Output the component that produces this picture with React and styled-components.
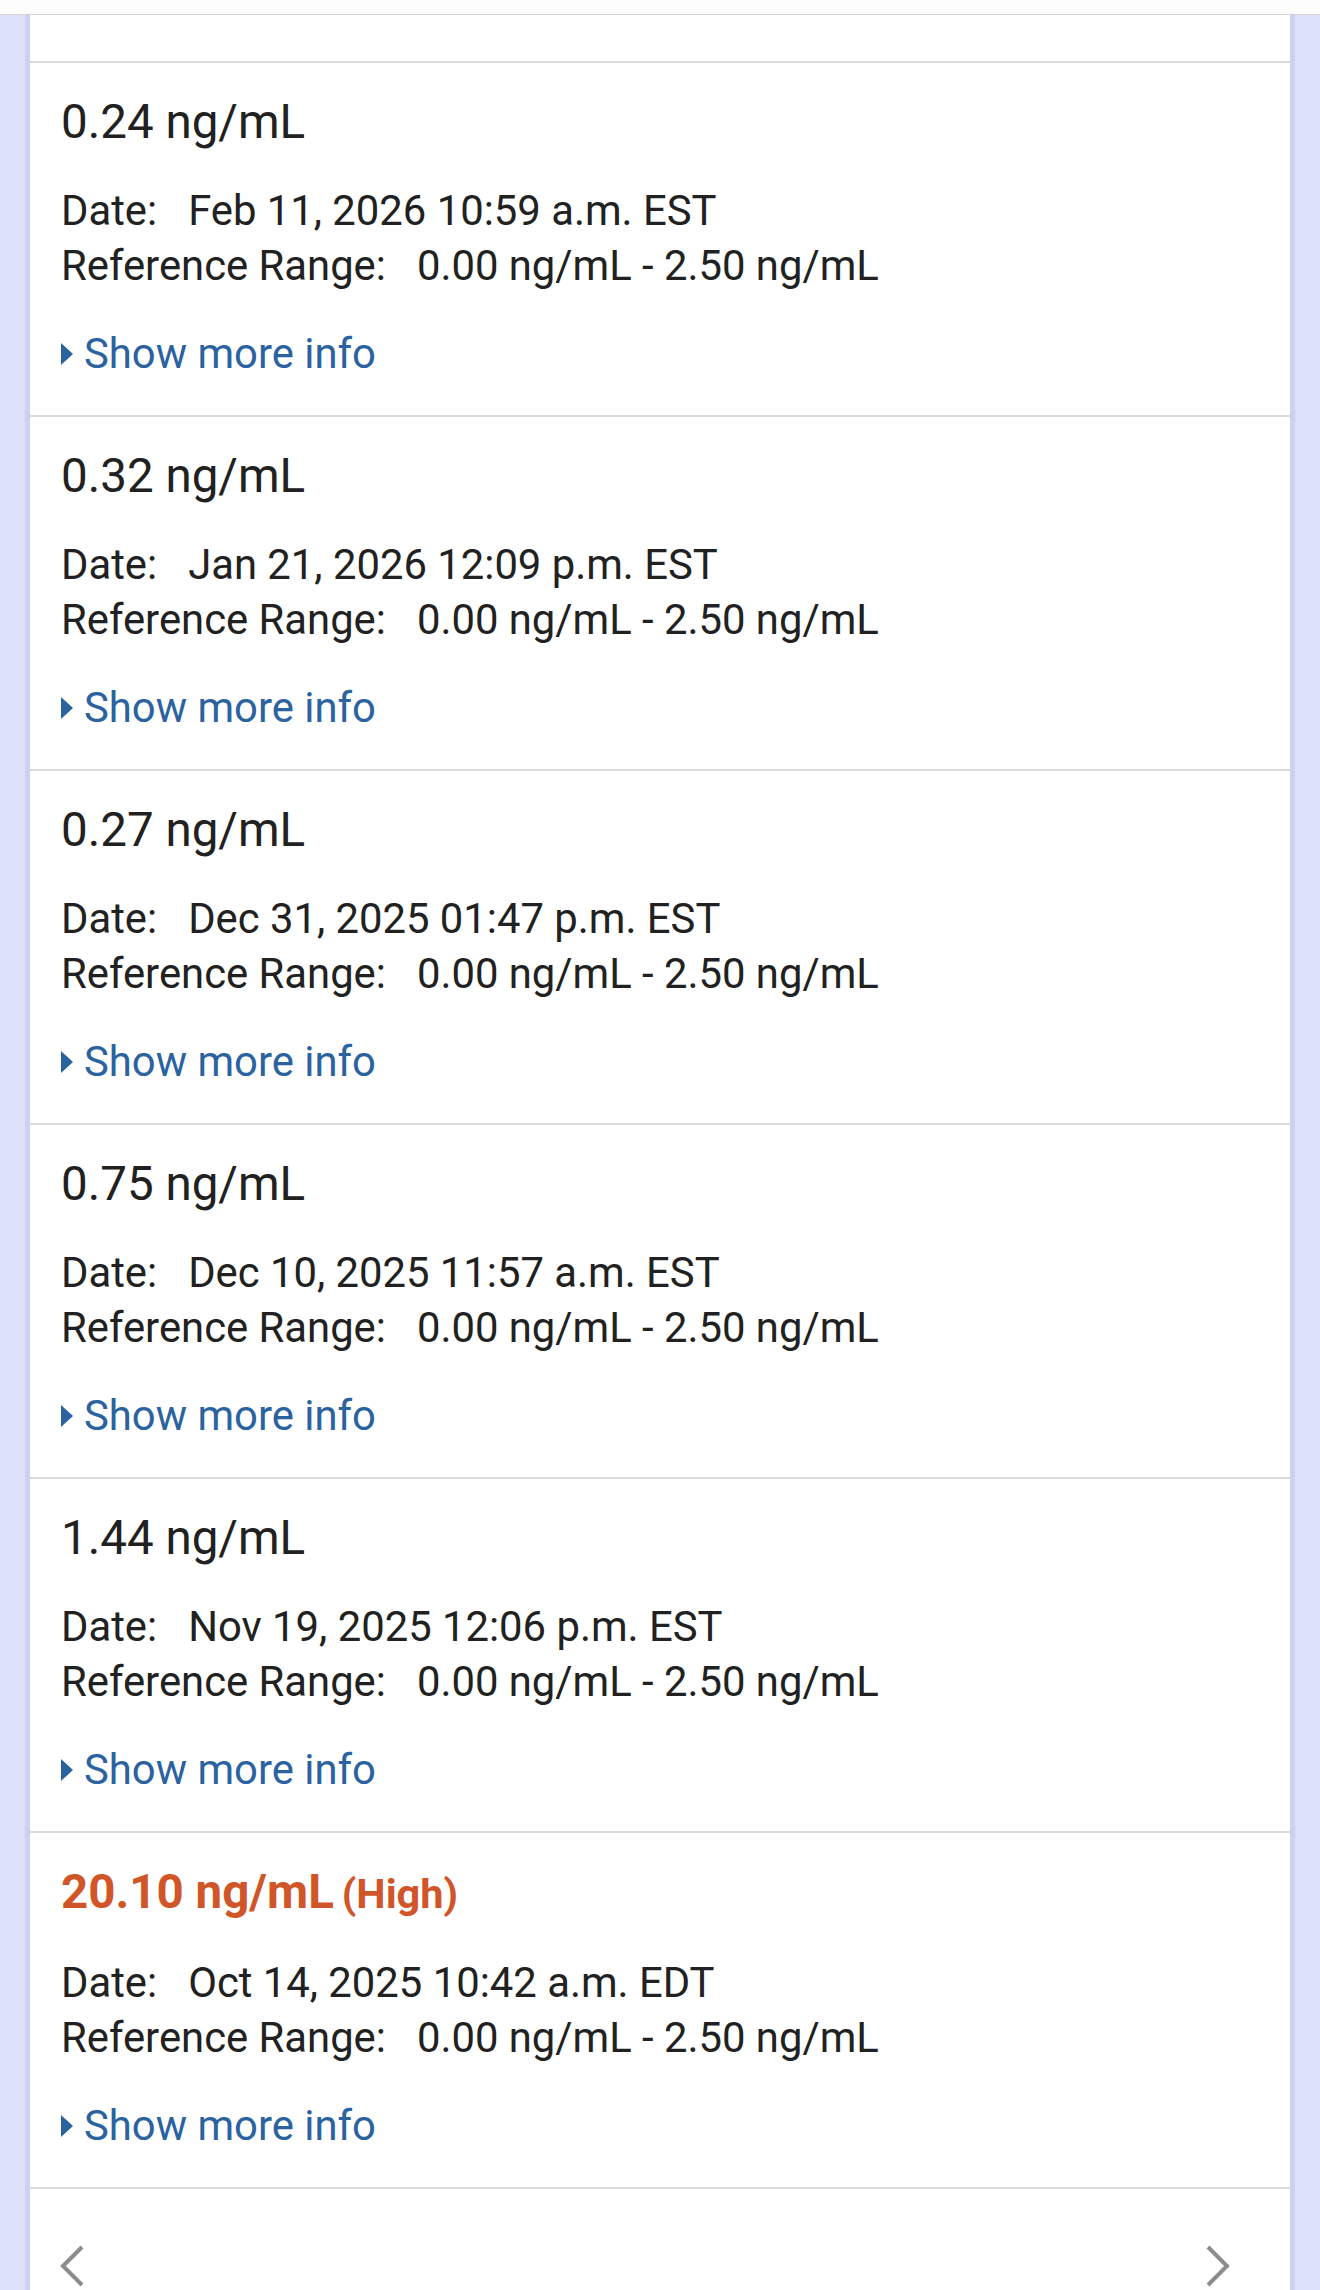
import React from 'react';
import styled, { createGlobalStyle } from 'styled-components';

const ink = '#212121';
const link = '#2b62a0';
const alert = '#d0562a';
const rule = '#dadada';
const lavender = '#dee1fb';

const GlobalStyle = createGlobalStyle`
  html, body {
    margin: 0;
    padding: 0;
    background: ${lavender};
  }
  body {
    font-family: Roboto, "Noto Sans", "Liberation Sans", sans-serif;
    color: ${ink};
  }
`;

const Shell = styled.div`
  min-height: 100vh;
  display: flex;
  flex-direction: column;
`;

const TopBar = styled.div`
  height: 14px;
  background: #fdfdfd;
  border-bottom: 1px solid #d4d4d4;
`;

const Panel = styled.main`
  flex: 1;
  margin: 0 25px;
  background: #fff;
  border-left: 5px solid #cdd0ee;
  border-right: 5px solid #cdd0ee;
`;

const CardTail = styled.div`
  height: 46px;
`;

const Card = styled.section`
  border-top: 2px solid ${rule};
  padding: 31px 31px 34px;
`;

const Value = styled.div`
  font-size: 47.5px;
  line-height: 56px;
  color: ${({ $high }) => ($high ? alert : ink)};
  font-weight: ${({ $high }) => ($high ? 700 : 400)};
  white-space: nowrap;
`;

const Flag = styled.span`
  font-size: 41.5px;
  margin-left: 8px;
`;

const Details = styled.div`
  margin-top: 33px;
  font-size: 41.8px;
  line-height: 55px;
`;

const Row = styled.div`
  white-space: nowrap;
`;

const Label = styled.span`
  margin-right: 31px;
`;

const MoreLink = styled.a`
  margin-top: 33px;
  display: flex;
  align-items: center;
  gap: 11px;
  font-size: 41.8px;
  line-height: 55px;
  color: ${link};
  text-decoration: none;
  cursor: pointer;
`;

const Caret = styled.span`
  width: 0;
  height: 0;
  border-top: 11px solid transparent;
  border-bottom: 11px solid transparent;
  border-left: 12px solid ${link};
`;

const Pager = styled.nav`
  border-top: 2px solid ${rule};
  display: flex;
  justify-content: space-between;
  padding: 56px 60px 40px 30px;
`;

const PageButton = styled.button`
  background: none;
  border: 0;
  padding: 0;
  width: 24px;
  height: 42px;
  color: #8c8c8c;
  cursor: pointer;
`;

const results = [
  { value: '0.24 ng/mL', date: 'Feb 11, 2026 10:59 a.m. EST' },
  { value: '0.32 ng/mL', date: 'Jan 21, 2026 12:09 p.m. EST' },
  { value: '0.27 ng/mL', date: 'Dec 31, 2025 01:47 p.m. EST' },
  { value: '0.75 ng/mL', date: 'Dec 10, 2025 11:57 a.m. EST' },
  { value: '1.44 ng/mL', date: 'Nov 19, 2025 12:06 p.m. EST' },
  { value: '20.10 ng/mL', date: 'Oct 14, 2025 10:42 a.m. EDT', high: true },
];

function Chevron({ dir }) {
  const points = dir === 'left' ? '22,2 3,21 22,40' : '2,2 21,21 2,40';
  return (
    <svg width="24" height="42" viewBox="0 0 24 42">
      <polyline points={points} fill="none" stroke="currentColor" strokeWidth="4" />
    </svg>
  );
}

function ResultCard({ value, date, high }) {
  return (
    <Card>
      <Value $high={high}>
        {value}
        {high && <Flag>(High)</Flag>}
      </Value>
      <Details>
        <Row>
          <Label>Date:</Label>
          {date}
        </Row>
        <Row>
          <Label>Reference Range:</Label>
          0.00 ng/mL - 2.50 ng/mL
        </Row>
      </Details>
      <MoreLink>
        <Caret />
        Show more info
      </MoreLink>
    </Card>
  );
}

export default function App() {
  return (
    <>
      <GlobalStyle />
      <Shell>
        <TopBar />
        <Panel>
          <CardTail />
          {results.map((r) => (
            <ResultCard key={r.date} {...r} />
          ))}
          <Pager>
            <PageButton aria-label="Previous">
              <Chevron dir="left" />
            </PageButton>
            <PageButton aria-label="Next">
              <Chevron dir="right" />
            </PageButton>
          </Pager>
        </Panel>
      </Shell>
    </>
  );
}
